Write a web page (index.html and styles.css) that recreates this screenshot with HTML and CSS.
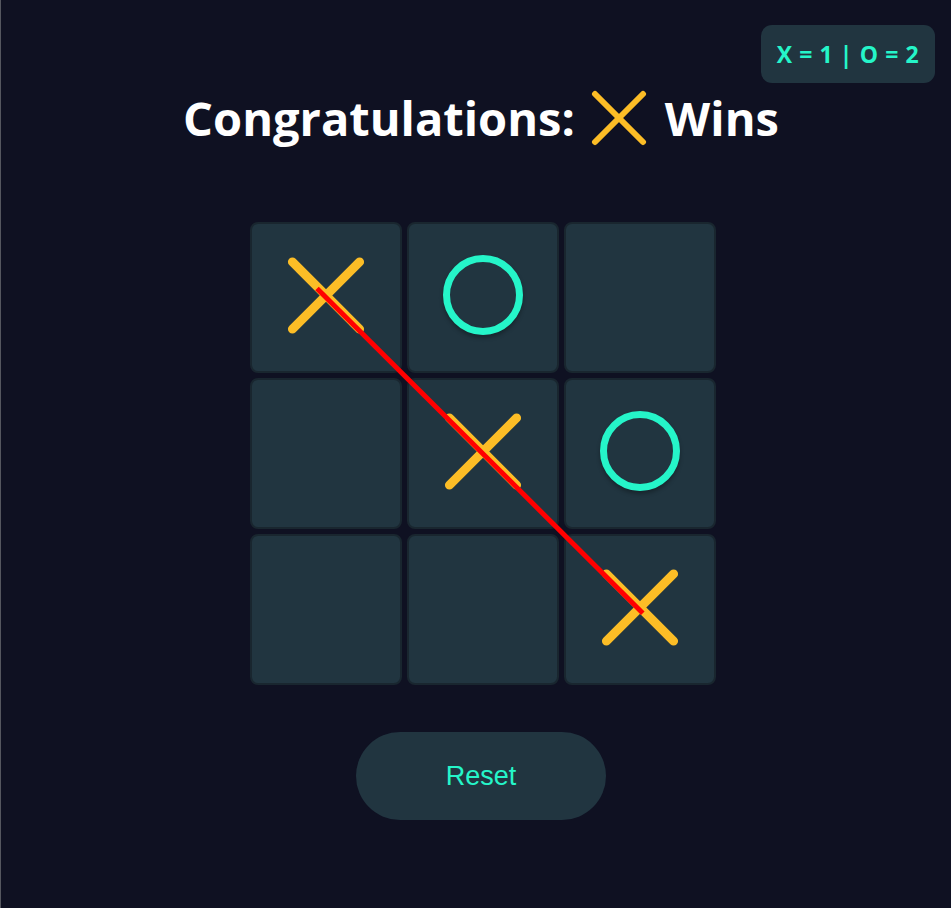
FILE: index.html
```html
<!DOCTYPE html>
<html lang="en">
<head>
<meta charset="utf-8">
<title>Tic Tac Toe</title>
<link rel="stylesheet" href="styles.css">
</head>
<body>
<div class="page">
  <div class="score">X = 1 | O = 2</div>
  <main class="game">
    <h1 class="title"><span>Congratulations:</span><svg class="title-x" viewBox="0 0 56 56" width="56" height="56" aria-hidden="true"><line x1="4" y1="4" x2="52" y2="52"/><line x1="52" y1="4" x2="4" y2="52"/></svg><span>Wins</span></h1>
    <div class="board">
      <div class="cell"><span class="mark-x"></span></div>
      <div class="cell"><span class="mark-o"></span></div>
      <div class="cell"></div>
      <div class="cell"></div>
      <div class="cell"><span class="mark-x"></span></div>
      <div class="cell"><span class="mark-o"></span></div>
      <div class="cell"></div>
      <div class="cell"></div>
      <div class="cell"><span class="mark-x"></span></div>
      <div class="win-line"></div>
    </div>
    <button class="reset">Reset</button>
  </main>
</div>
</body>
</html>
```
FILE: styles.css
```css
html, body {
  margin: 0;
  padding: 0;
  background: #0f1122;
}
body {
  min-height: 908px;
  border-left: 1px solid #55575f;
  box-sizing: border-box;
}
.page {
  position: relative;
  min-height: 908px;
  font-family: "Open Sans", "Noto Sans", sans-serif;
}
.score {
  position: absolute;
  top: 25px;
  right: 16px;
  width: 174px;
  height: 58px;
  box-sizing: border-box;
  display: flex;
  align-items: center;
  justify-content: center;
  background: #213540;
  border-radius: 11px;
  color: #25f5c9;
  font-weight: 700;
  font-size: 23px;
  letter-spacing: 0.6px;
}
.game {
  display: flex;
  flex-direction: column;
  align-items: center;
  padding-left: 10px;
  padding-top: 80px;
}
.title {
  margin: 0;
  color: #ffffff;
  font-size: 47px;
  font-weight: 700;
  height: 76px;
  display: flex;
  align-items: center;
}
.title-x {
  margin: 0 18px 0 16px;
}
.title-x line {
  stroke: #fcbd26;
  stroke-width: 6;
  stroke-linecap: round;
}
.board {
  position: relative;
  margin-top: 66px;
  margin-left: 4px;
  display: grid;
  grid-template-columns: repeat(3, 152px);
  grid-template-rows: repeat(3, 151px);
  gap: 5px;
}
.cell {
  background: #213540;
  border: 2px solid #19262f;
  border-radius: 8px;
  box-sizing: border-box;
  display: flex;
  align-items: center;
  justify-content: center;
}
.mark-x {
  position: relative;
  width: 104px;
  height: 104px;
  transform: translateY(-2px);
}
.mark-x::before,
.mark-x::after {
  content: "";
  position: absolute;
  left: 0;
  top: 47.5px;
  width: 104px;
  height: 9px;
  border-radius: 4.5px;
  background: #fcbd26;
}
.mark-x::before { transform: rotate(45deg); }
.mark-x::after { transform: rotate(-45deg); }
.mark-o {
  width: 80px;
  height: 80px;
  box-sizing: border-box;
  border: 7px solid #25f5c9;
  border-radius: 50%;
  transform: translateY(-3px);
  box-shadow: 0 3px 4px rgba(0, 0, 0, 0.3);
}
.win-line {
  position: absolute;
  left: 67px;
  top: 63.5px;
  width: 460px;
  height: 5px;
  background: #ff0000;
  transform-origin: 0 50%;
  transform: rotate(44.9deg);
}
.reset {
  margin-top: 47px;
  width: 250px;
  height: 88px;
  border: none;
  border-radius: 44px;
  background: #213540;
  color: #25f5c9;
  font-family: "Liberation Sans", Arial, sans-serif;
  font-size: 27px;
}
```
